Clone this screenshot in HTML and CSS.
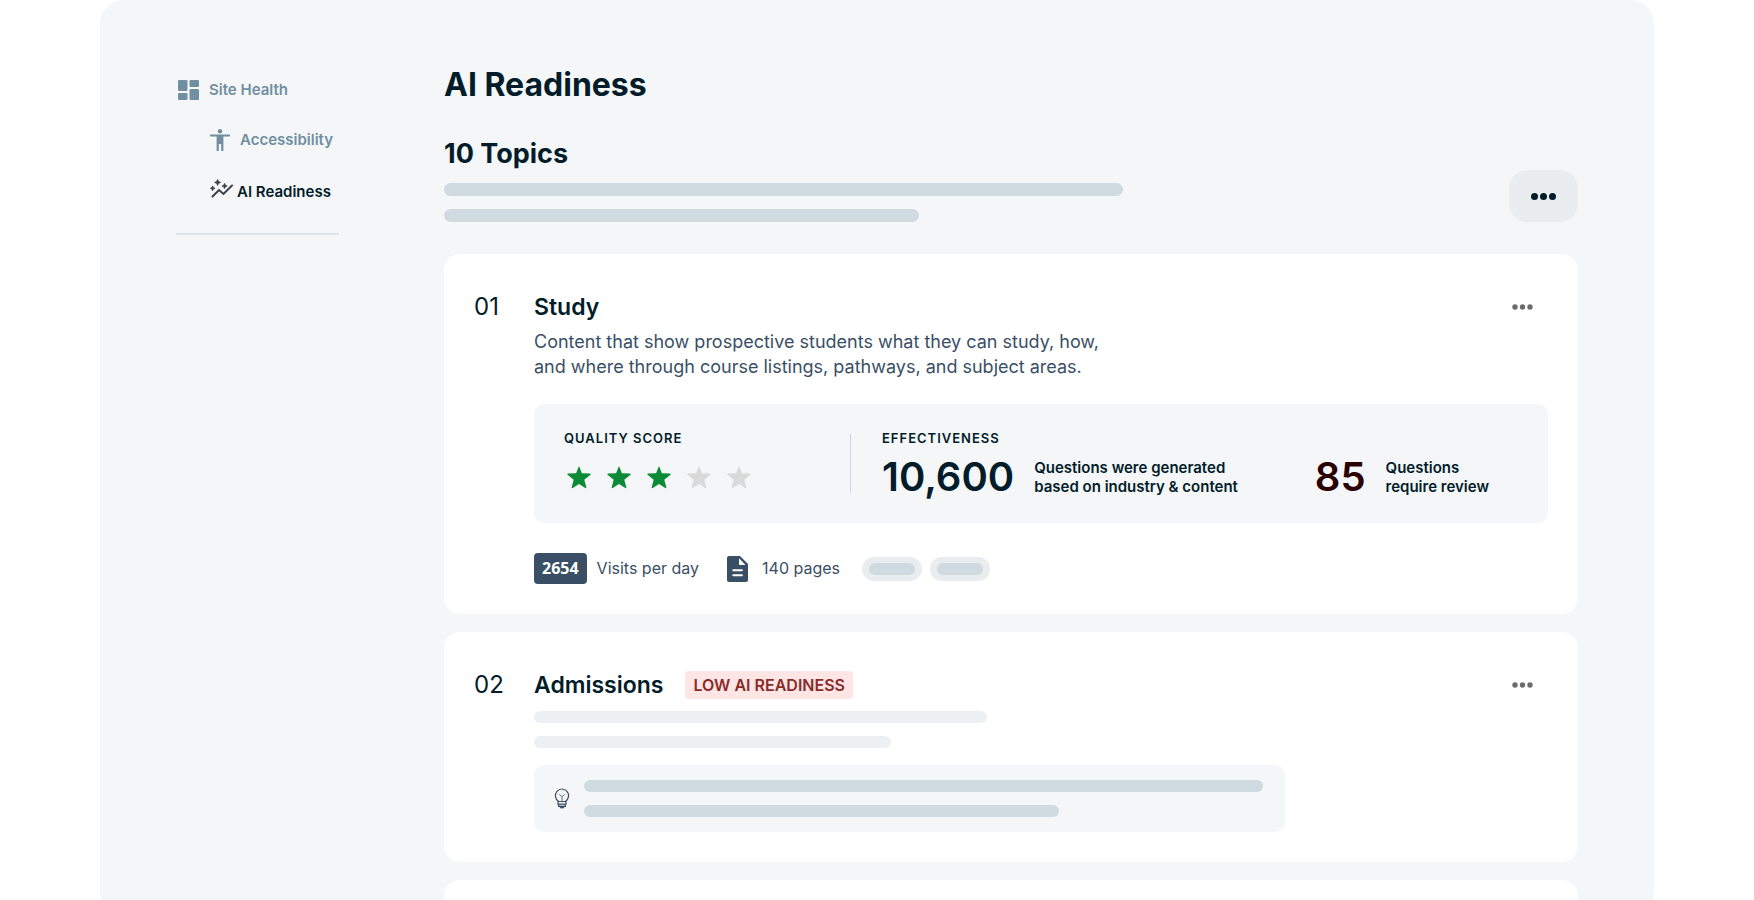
FILE: index.html
```html
<!DOCTYPE html>
<html lang="en">
  <head>
    <meta charset="UTF-8" />
    <meta name="viewport" content="width=device-width, initial-scale=1.0" />
    <title>AI Readiness</title>
    <link rel="stylesheet" href="styles.css">
  </head>
  <body>
    <svg class="sprite" aria-hidden="true">
      <symbol id="star" viewBox="0 0 24 24">
        <path d="M12 .9 14.9 8.2 23 8.6a.7.7 0 0 1 .4 1.200L17.300 14.700 19.300 22.300a.7.7 0 0 1-1 .8L12 19 5.700 23.100a.7.7 0 0 1-1-.8L6.700 14.700.6 9.800A.7.7 0 0 1 1 8.600L9.100 8.200Z" />
      </symbol>
    </svg>

    <div class="panel">
      <nav class="sidebar">
        <a class="nav-item" href="#">
          <svg width="21" height="20" viewBox="0 0 21 20">
            <rect x="0" y="0" width="9.500" height="11" rx="1.200" />
            <rect x="11.500" y="0" width="9.500" height="7" rx="1.200" />
            <rect x="0" y="13" width="9.500" height="7" rx="1.200" />
            <rect x="11.500" y="9" width="9.500" height="11" rx="1.200" />
          </svg>
          <span>Site Health</span>
        </a>
        <a class="nav-item nav-child" href="#">
          <svg width="20" height="22" viewBox="0 0 20 22">
            <circle cx="10" cy="2.200" r="2.200" />
            <path d="M.8 5.400h18.400a.8.8 0 0 1 0 2.100H13.400V22h-2.200v-6.900H8.800V22H6.600V7.500H.8a.8.8 0 0 1 0-2.100Z" />
          </svg>
          <span>Accessibility</span>
        </a>
        <a class="nav-item nav-child active" href="#" aria-current="page">
          <svg width="23" height="26" viewBox="0 0 23 26">
            <path d="M2.500 17.500 9 11l4.500 4L22 6.500" fill="none" stroke="currentColor" stroke-width="2" stroke-linecap="round" />
            <path d="M7.600 .4 8.500 2.500 10.600 3.400 8.500 4.300 7.600 6.400 6.700 4.300 4.600 3.400 6.700 2.500ZM14.600 4.400 15.400 6.200 17.200 7 15.400 7.800 14.600 9.600 13.800 7.800 12 7 13.800 6.200ZM2.600 6.900 3.300 8.600 5 9.300 3.300 10 2.600 11.700 1.900 10 .4 9.300 1.900 8.600Z" stroke="currentColor" stroke-width=".8" />
          </svg>
          <span>AI Readiness</span>
        </a>
      </nav>

      <main class="main">
        <h1>AI Readiness</h1>
        <header class="topics">
          <div class="topics-text">
            <h2>10 Topics</h2>
            <div class="bar bar-thick bar-xl"></div>
            <div class="bar bar-thick bar-lg"></div>
          </div>
          <button class="more-btn" type="button" aria-label="More options">
            <svg width="25" height="7" viewBox="0 0 25 7">
              <circle cx="3.500" cy="3.500" r="3.500" />
              <circle cx="12.500" cy="3.500" r="3.500" />
              <circle cx="21.500" cy="3.500" r="3.500" />
            </svg>
          </button>
        </header>

        <section class="card">
          <div class="number">01</div>
          <div class="content">
            <div class="card-head">
              <h3>Study</h3>
              <button class="card-menu" type="button" aria-label="Study options">
                <svg width="21" height="6" viewBox="0 0 21 6">
                  <circle cx="3" cy="3" r="2.700" />
                  <circle cx="10.500" cy="3" r="2.700" />
                  <circle cx="18" cy="3" r="2.700" />
                </svg>
              </button>
            </div>
            <p class="description">Content that show prospective students what they can study, how,<br />and where through course listings, pathways, and subject areas.</p>

            <div class="stats">
              <div class="quality">
                <h4>QUALITY SCORE</h4>
                <div class="stars" role="img" aria-label="3 out of 5">
                  <svg class="star on"><use href="#star" /></svg>
                  <svg class="star on"><use href="#star" /></svg>
                  <svg class="star on"><use href="#star" /></svg>
                  <svg class="star"><use href="#star" /></svg>
                  <svg class="star"><use href="#star" /></svg>
                </div>
              </div>
              <div class="effectiveness">
                <h4>EFFECTIVENESS</h4>
                <div class="figures">
                  <div class="figure">
                    <strong>10,600</strong>
                    <span>Questions were generated<br />based on industry &amp; content</span>
                  </div>
                  <div class="figure review">
                    <strong>85</strong>
                    <span>Questions<br />require review</span>
                  </div>
                </div>
              </div>
            </div>

            <div class="meta">
              <span class="visits">2654</span>
              <span class="meta-label">Visits per day</span>
              <svg class="doc" width="21" height="26" viewBox="0 0 21 26">
                <path d="M2 0H13L21 8V24a2 2 0 0 1-2 2H2a2 2 0 0 1-2-2V2A2 2 0 0 1 2 0Z" fill="#3a4f66" />
                <path d="M12 2.200V9H18.500" fill="#fff" />
                <path d="M6.300 14.300h8.600M6.300 19.300h8.600" stroke="#fff" stroke-width="2" stroke-linecap="round" />
              </svg>
              <span class="meta-label">140 pages</span>
              <div class="pills">
                <div class="pill"></div>
                <div class="pill"></div>
              </div>
            </div>
          </div>
        </section>

        <section class="card">
          <div class="number">02</div>
          <div class="content">
            <div class="card-head">
              <h3>Admissions</h3>
              <span class="tag">LOW AI READINESS</span>
              <button class="card-menu" type="button" aria-label="Admissions options">
                <svg width="21" height="6" viewBox="0 0 21 6">
                  <circle cx="3" cy="3" r="2.700" />
                  <circle cx="10.500" cy="3" r="2.700" />
                  <circle cx="18" cy="3" r="2.700" />
                </svg>
              </button>
            </div>
            <div class="lines">
              <div class="bar bar-light bar-md"></div>
              <div class="bar bar-light bar-sm"></div>
            </div>
            <div class="tip">
              <svg width="16" height="21" viewBox="0 0 16 21" fill="none" stroke="#3a4f66">
                <path d="M4.500 13.200a6.600 6.600 0 1 1 7 0" stroke-width="1.200" />
                <path d="M5.300 6.500 8 8.600 10.700 6.500M8 8.600V13" stroke-width=".8" />
                <path d="M4 13.500H12V16.200H4ZM4.600 16.200H11.400V18.300H4.600Z" stroke-width="1.200" />
                <path d="M5.700 18.300H10.300L9.500 20H6.500Z" fill="#3a4f66" stroke-width=".8" />
              </svg>
              <div class="tip-lines">
                <div class="bar bar-xl"></div>
                <div class="bar bar-lg"></div>
              </div>
            </div>
          </div>
        </section>

        <section class="card"></section>
      </main>
    </div>
  </body>
</html>
```
FILE: styles.css
```css
:root {
  --ink: #021d29;
  --slate: #3a4f66;
  --muted: #718fa1;
  --surface: #f4f6f8;
  --line: #d0dbe1;
  --line-light: #ecf0f3;
}

* {
  box-sizing: border-box;
  margin: 0;
  padding: 0;
}

body {
  height: 100vh;
  overflow: hidden;
  background-color: white;
  color: var(--ink);
  font-family: Inter, "Liberation Sans", sans-serif;
}

button {
  border: none;
  background: none;
  cursor: pointer;
}

.sprite {
  display: none;
}

.panel {
  display: flex;
  gap: 105px;
  height: calc(100vh + 16px);
  margin: 0 100px;
  padding: 0 76px;
  border-radius: 24px;
  background-color: var(--surface);
  overflow: hidden;
}

.sidebar {
  flex: 0 0 163px;
  align-self: flex-start;
  display: flex;
  flex-direction: column;
  gap: 28px;
  padding: 79px 0 28px;
  border-bottom: 2px solid #dde5ea;
}

.nav-item {
  display: flex;
  align-items: center;
  gap: 10px;
  padding-left: 2px;
  color: var(--muted);
  font-size: 15px;
  font-weight: 600;
  line-height: 22px;
  text-decoration: none;
  white-space: nowrap;
}

.nav-item svg {
  flex: none;
  fill: currentColor;
}

.nav-child {
  padding-left: 34px;
}

.active {
  gap: 4px;
  color: var(--ink);
}

.active svg {
  color: #3c3f43;
}

.main {
  flex: 1;
  min-width: 0;
  display: flex;
  flex-direction: column;
  gap: 18px;
  padding-top: 65px;
}

h1 {
  font-size: 32px;
  font-weight: 700;
  line-height: 40px;
}

.topics {
  display: flex;
  justify-content: space-between;
  align-items: flex-end;
  margin: 14px 0;
}

.topics-text {
  flex: 1;
  display: flex;
  flex-direction: column;
  gap: 13px;
}

h2 {
  font-size: 27px;
  font-weight: 700;
  line-height: 33px;
}

.bar {
  height: 12px;
  max-width: 100%;
  border-radius: 6px;
  background-color: var(--line);
}

.bar-thick {
  height: 13px;
  border-radius: 7px;
}

.bar-light {
  background-color: var(--line-light);
}

.bar-xl {
  width: 679px;
}

.bar-lg {
  width: 475px;
}

.bar-md {
  width: 453px;
}

.bar-sm {
  width: 357px;
}

.more-btn {
  display: flex;
  align-items: center;
  justify-content: center;
  width: 69px;
  height: 52px;
  border-radius: 18px;
  background-color: #e9edf0;
  fill: var(--ink);
}

.card {
  display: flex;
  flex: none;
  min-height: 60px;
  padding: 37px 30px 30px;
  border-radius: 16px;
  background-color: white;
}

.number {
  flex: 0 0 60px;
  font-size: 24px;
  font-weight: 400;
  line-height: 32px;
}

.content {
  flex: 1;
  min-width: 0;
}

.card-head {
  display: flex;
  align-items: center;
  gap: 22px;
  height: 32px;
}

h3 {
  font-size: 23px;
  font-weight: 600;
  line-height: 32px;
}

.card-menu {
  display: flex;
  margin-left: auto;
  padding: 10px 15px;
  fill: #6b6b6b;
}

.description {
  margin-top: 6px;
  color: var(--slate);
  font-size: 18px;
  line-height: 25px;
}

.stats {
  display: flex;
  margin-top: 25px;
  padding: 26px 30px 25px;
  border-radius: 10px;
  background-color: var(--surface);
}

.quality {
  flex: 0 0 286px;
}

.effectiveness {
  position: relative;
  flex: 1;
  padding-left: 32px;
}

/* divider between the two scores */
.effectiveness::before {
  content: "";
  position: absolute;
  top: 4px;
  bottom: 5px;
  left: 0;
  width: 1px;
  background-color: #c9d3e3;
}

h4 {
  font-size: 13px;
  font-weight: 600;
  line-height: 16px;
  letter-spacing: 1px;
}

.stars {
  display: flex;
  align-items: center;
  gap: 16px;
  height: 42px;
  margin-top: 10px;
  padding-left: 3px;
}

.star {
  width: 24px;
  height: 24px;
  fill: #d9d9d9;
}

.on {
  fill: #0a8a34;
}

.figures {
  display: flex;
  justify-content: space-between;
  margin-top: 10px;
  padding-right: 29px;
}

.figure {
  display: flex;
  align-items: center;
  gap: 20px;
  font-size: 15px;
  font-weight: 600;
  line-height: 19px;
  white-space: nowrap;
}

.figure strong {
  font-size: 40px;
  font-weight: 600;
  line-height: 42px;
}

.review strong {
  color: #2b0203;
}

.meta {
  display: flex;
  align-items: center;
  margin-top: 30px;
  color: var(--slate);
  font-size: 16px;
  line-height: 31px;
}

.visits {
  margin-right: 10px;
  padding: 0 8px;
  border-radius: 4px;
  background-color: var(--slate);
  color: white;
  font-family: "Noto Sans", "Open Sans", sans-serif;
  font-weight: 700;
}

.doc {
  margin: 0 14px 0 28px;
}

.pills {
  display: flex;
  gap: 8px;
  margin-left: 22px;
}

.pill {
  width: 60px;
  height: 24px;
  padding: 6px 7px;
  border-radius: 12px;
  background-color: #e9edf0;
}

.pill::before {
  content: "";
  display: block;
  height: 12px;
  border-radius: 6px;
  background-color: var(--line);
}

.tag {
  padding: 0 8px;
  border-radius: 4px;
  background-color: #ffe5e4;
  color: #8a2a2b;
  font-size: 16px;
  font-weight: 600;
  line-height: 28px;
}

.lines {
  display: flex;
  flex-direction: column;
  gap: 13px;
  margin-top: 10px;
}

.tip {
  display: flex;
  align-items: center;
  gap: 14px;
  max-width: 751px;
  margin-top: 17px;
  padding: 15px 21px 15px 20px;
  border-radius: 10px;
  background-color: var(--surface);
}

.tip svg {
  flex: none;
}

.tip-lines {
  flex: 1;
  display: flex;
  flex-direction: column;
  gap: 13px;
}
```
